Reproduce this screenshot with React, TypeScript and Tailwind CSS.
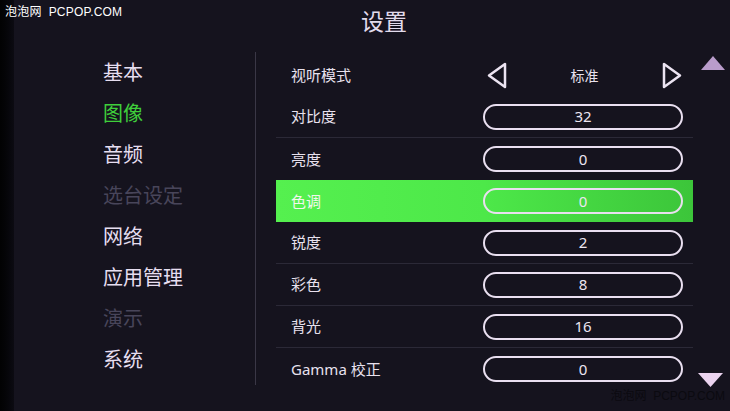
import React from "react";

const menu = [
  { label: "基本", state: "normal" },
  { label: "图像", state: "active" },
  { label: "音频", state: "normal" },
  { label: "选台设定", state: "disabled" },
  { label: "网络", state: "normal" },
  { label: "应用管理", state: "normal" },
  { label: "演示", state: "disabled" },
  { label: "系统", state: "normal" },
];

const rows = [
  { label: "对比度", value: "32", line: true },
  { label: "亮度", value: "0", line: false },
  { label: "色调", value: "0", line: false, selected: true },
  { label: "锐度", value: "2", line: true },
  { label: "彩色", value: "8", line: true },
  { label: "背光", value: "16", line: true },
  { label: "Gamma 校正", value: "0", line: false },
];

function Pill({ value }: { value: string }) {
  return (
    <div className="mr-[10px] flex h-[26px] w-[200px] items-center justify-center rounded-full border-2 border-[#e9dff0] text-[15px] text-[#ece6f2]">
      {value}
    </div>
  );
}

function Arrow({ dir }: { dir: "left" | "right" }) {
  return (
    <svg width="22" height="27" viewBox="0 0 22 27">
      {dir === "left" ? (
        <polygon points="19,2 19,25 3,13.5" fill="none" stroke="#ece4f2" strokeWidth="2.5" strokeLinejoin="round" />
      ) : (
        <polygon points="3,2 3,25 19,13.5" fill="none" stroke="#ece4f2" strokeWidth="2.5" strokeLinejoin="round" />
      )}
    </svg>
  );
}

export default function App() {
  return (
    <div
      className="relative flex h-[411px] w-[730px] overflow-hidden bg-[#15131e]"
      style={{ fontFamily: '"Noto Sans", "Noto Sans CJK SC", sans-serif' }}
    >
      <div className="w-[14px] bg-gradient-to-r from-[#020203] to-[#0c0b12]" />

      <div className="flex flex-1 flex-col">
        <div className="flex h-[52px] items-start justify-center pl-[24px] pt-[4px] text-[23px] text-[#e2dbec]">
          设置
        </div>

        <div className="flex">
          <div className="w-[241px] pl-[89px]">
            {menu.map((m) => (
              <div
                key={m.label}
                className={`h-[41px] text-[20px] leading-[41px] ${
                  m.state === "active"
                    ? "text-[#3fcf3b]"
                    : m.state === "disabled"
                    ? "text-[#48455a]"
                    : "text-[#e6def0]"
                }`}
              >
                {m.label}
              </div>
            ))}
          </div>

          <div className="h-[333px] w-px bg-[#3a3746]" />

          <div className="ml-[20px] mt-[2px] w-[417px]">
            <div className="flex h-[42px] items-center justify-between">
              <span className="pl-[15px] text-[15px] text-[#e8e1ee]">视听模式</span>
              <div className="mr-[10px] flex w-[200px] items-center justify-between pl-[3px]">
                <Arrow dir="left" />
                <span className="text-[14px] text-[#e8e1ee]">标准</span>
                <Arrow dir="right" />
              </div>
            </div>
            {rows.map((r) => (
              <div
                key={r.label}
                className={`flex h-[42px] items-center justify-between ${
                  r.line ? "border-b border-[#2b2937]" : ""
                } ${r.selected ? "bg-gradient-to-r from-[#55f04f] via-[#4de849] to-[#3cc53a]" : ""}`}
              >
                <span className={`pl-[15px] text-[15px] ${r.selected ? "text-[#f2f7ee]" : "text-[#e8e1ee]"}`}>
                  {r.label}
                </span>
                <Pill value={r.value} />
              </div>
            ))}
          </div>

          <div className="flex w-[37px] flex-col items-center justify-between pb-[3px] pt-[4px]">
            <svg width="24" height="14" viewBox="0 0 24 14" className="ml-[2px]">
              <polygon points="12,0 24,14 0,14" fill="#b99ccb" />
            </svg>
            <svg width="25" height="14" viewBox="0 0 25 14" className="-ml-[2px]">
              <polygon points="0,0 25,0 12.5,14" fill="#ebd3ef" />
            </svg>
          </div>
        </div>
      </div>

      <div
        className="absolute left-[5px] top-[3px] text-[12px] tracking-[0.2px] text-white"
        style={{ fontFamily: '"Liberation Sans", "Noto Sans CJK SC", sans-serif' }}
      >
        泡泡网&nbsp; PCPOP.COM
      </div>
      <div
        className="absolute right-[5px] bottom-[6px] text-[12px] text-[#0b0a10]"
        style={{ fontFamily: '"Liberation Sans", "Noto Sans CJK SC", sans-serif' }}
      >
        泡泡网&nbsp; PCPOP.COM
      </div>
    </div>
  );
}
